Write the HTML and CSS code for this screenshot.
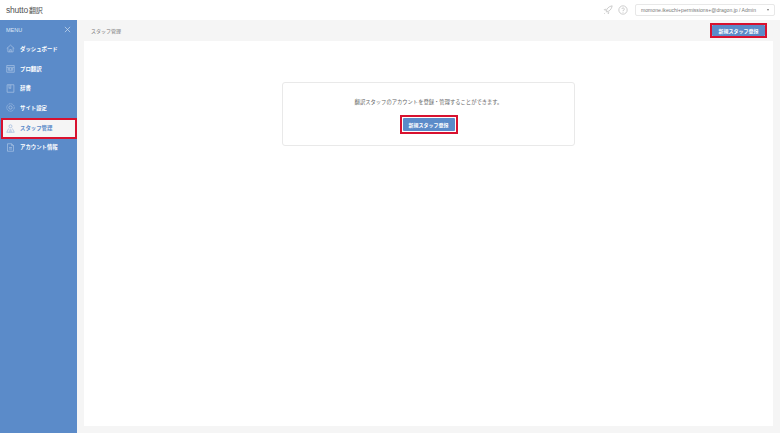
FILE: index.html
```html
<!DOCTYPE html>
<html lang="ja">
<head>
  <meta charset="UTF-8" />
  <meta name="viewport" content="width=device-width, initial-scale=1.0" />
  <title>スタッフ管理</title>
  <link rel="stylesheet" href="styles.css">
</head>
<body>
  <header class="topbar">
    <div class="logo">shutto<span class="logo-sub">翻訳</span></div>
    <div class="top-right">
      <svg class="top-icon" viewBox="0 0 12 12" width="10" height="10"><path d="M4 8 C4 4.5 7 1.5 11 1 C10.5 5 7.500 8 4 8 Z M4 5 L1.500 5.500 L3 7 M7 8 L6.500 10.500 L5 9 M2.500 9.500 L1.500 10.500" /></svg>
      <svg class="top-icon help" viewBox="0 0 12 12" width="10" height="10"><circle cx="6" cy="6" r="5" /><path d="M4.600 4.800 A1.500 1.500 0 1 1 6 6.500 V7.500 M6 8.600 V9.400" /></svg>
      <div class="account">momone.ikeuchi+permissions+@dragon.jp / Admin<span class="caret"></span></div>
    </div>
  </header>

  <div class="layout">
    <nav class="sidebar">
      <div class="menu-head">
        <span>MENU</span>
        <svg class="menu-close" viewBox="0 0 8 8" width="7" height="7"><path d="M1 1 L7 7 M7 1 L1 7" /></svg>
      </div>
      <a class="nav-item">
        <svg class="nav-icon" viewBox="0 0 12 12"><path d="M1 6 L6 1.500 L11 6 M2.500 5 V10.500 H9.500 V5 M5 10.500 V7.500 H7 V10.500" /></svg>
        ダッシュボード
      </a>
      <a class="nav-item">
        <svg class="nav-icon" viewBox="0 0 12 12"><path d="M1 2 H11 V11 H1 Z M1 4.500 H11 M3 6 H5 V7.500 H3 Z M7 6 H9 V7.500 H7 Z M3 9 H9" /></svg>
        プロ翻訳
      </a>
      <a class="nav-item">
        <svg class="nav-icon" viewBox="0 0 12 12"><path d="M1.500 1 H10.500 V11 H1.500 Z M4 1 V6 L5.200 5 L6.400 6 V1" /></svg>
        辞書
      </a>
      <a class="nav-item">
        <svg class="nav-icon" viewBox="0 0 12 12"><circle cx="6" cy="6" r="2.200" /><circle cx="6" cy="6" r="5" stroke-dasharray="2 1" /></svg>
        サイト設定
      </a>
      <a class="nav-item active">
        <svg class="nav-icon" viewBox="0 0 12 12"><circle cx="6" cy="3" r="2" /><path d="M3.500 6 L1 11 H11 L8.500 6 M5 11 L5.500 7 M7 11 L6.500 7" /></svg>
        スタッフ管理
      </a>
      <a class="nav-item">
        <svg class="nav-icon" viewBox="0 0 12 12"><path d="M2 1 H7.500 L10 3.500 V11 H2 Z M7.500 1 V3.500 H10 M4 6 H8 M4 8 H8" /></svg>
        アカウント情報
      </a>
    </nav>

    <main class="main">
      <div class="page-head">
        <span class="page-title">スタッフ管理</span>
        <div class="marked marked-top"><button class="btn btn-top">新規スタッフ登録</button></div>
      </div>
      <div class="panel">
        <div class="empty-box">
          <p class="empty-text">翻訳スタッフのアカウントを登録・管理することができます。</p>
          <div class="marked"><button class="btn">新規スタッフ登録</button></div>
        </div>
      </div>
    </main>
  </div>
</body>
</html>
```

FILE: styles.css
```css
html, body {
  height: 100%;
}
body {
  margin: 0;
  font-family: "Noto Sans CJK JP", "Liberation Sans", sans-serif;
  background: #f5f5f5;
  color: #555;
  overflow: hidden;
  display: flex;
  flex-direction: column;
}
.topbar {
  height: 20px;
  flex: none;
  background: white;
  display: flex;
  align-items: center;
  justify-content: space-between;
  padding: 0 5px 0 6px;
}
.logo {
  font-family: "Liberation Sans", sans-serif;
  font-size: 8.5px;
  color: #555;
  letter-spacing: -0.2px;
}
.logo-sub {
  font-family: "Noto Sans CJK JP", sans-serif;
  font-size: 7px;
  margin-left: 1px;
}
.top-right {
  display: flex;
  align-items: center;
}
.top-icon {
  fill: none;
  stroke: #c4c4c4;
  stroke-width: 1;
  margin-right: 5px;
}
.top-icon.help {
  margin-right: 7px;
}
.account {
  width: 140px;
  height: 12px;
  box-sizing: border-box;
  border: 1px solid #e8e8e8;
  border-radius: 2px;
  font-family: "Liberation Sans", sans-serif;
  font-size: 5.1px;
  color: #777;
  padding: 0 5px;
  display: flex;
  align-items: center;
  white-space: nowrap;
}
.caret {
  margin-left: auto;
  border-left: 1.5px solid transparent;
  border-right: 1.5px solid transparent;
  border-top: 2px solid #777;
}
.layout {
  flex: 1;
  display: flex;
  min-height: 0;
}
.sidebar {
  width: 77px;
  flex: none;
  background: #5b8bc9;
  color: white;
}
.menu-head {
  height: 19px;
  display: flex;
  align-items: center;
  justify-content: space-between;
  padding: 0 6px;
  font-family: "Liberation Sans", sans-serif;
  font-size: 5.5px;
  color: #dce7f5;
}
.menu-close {
  fill: none;
  stroke: #cfdef0;
  stroke-width: 0.8;
}
.nav-item {
  height: 19.7px;
  display: flex;
  align-items: center;
  gap: 5px;
  padding-left: 6px;
  font-size: 5.4px;
  font-weight: 700;
  white-space: nowrap;
  color: white;
}
.nav-icon {
  width: 9px;
  height: 9px;
  fill: none;
  stroke: #c6d7ee;
  stroke-width: 0.7;
}
.nav-item.active {
  height: 21px;
  margin: 0 0 -1.300px 1px;
  padding-left: 5px;
  background: #f5f5f5;
  color: #5b8bc9;
  outline: 2px solid #d8112f;
  outline-offset: -2px;
}
.nav-item.active .nav-icon {
  stroke: #7fa3d4;
}
.main {
  flex: 1;
  min-width: 0;
  display: flex;
  flex-direction: column;
  padding: 0 7px 7px;
}
.page-head {
  height: 21px;
  flex: none;
  display: flex;
  align-items: center;
  justify-content: space-between;
  padding: 0 6px 0 7px;
}
.page-title {
  font-size: 5px;
  color: #777;
}
.panel {
  flex: 1;
  background: white;
  padding-top: 41px;
  display: flex;
  justify-content: center;
  align-items: flex-start;
}
.empty-box {
  width: 293px;
  height: 64px;
  box-sizing: border-box;
  border: 1px solid #e9e9e9;
  border-radius: 3px;
  display: flex;
  flex-direction: column;
  align-items: center;
  padding-top: 15px;
}
.empty-text {
  margin: 0 0 8px;
  font-size: 5.3px;
  line-height: 9px;
  color: #666;
}
.marked {
  border: 2px solid #d8112f;
  padding: 1px;
  background: white;
  display: flex;
}
.marked-top {
  padding: 0;
}
.btn {
  width: 52px;
  height: 13px;
  border: 0;
  border-radius: 1px;
  padding: 0;
  background: #5b8bc9;
  color: white;
  font-family: inherit;
  font-size: 5px;
  font-weight: 700;
  line-height: 13px;
}
.btn-top {
  width: 53px;
  height: 11px;
  line-height: 11px;
}
```
